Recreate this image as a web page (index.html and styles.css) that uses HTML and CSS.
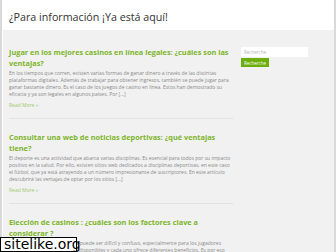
FILE: index.html
```html
<!doctype html>
<html>
<head>
	<title>¿Para información ¡Ya está aquí!</title>
	<meta charset="utf-8">
	<link rel="stylesheet" href="styles.css">
</head>
<body>

	<div class="page">
		<div class="header">
			<h1>¿Para información ¡Ya está aquí!</h1>
		</div>

		<div class="content">
			<div class="main">

				<div class="post">
					<h2>Jugar en los mejores casinos en línea legales: ¿cuáles son las ventajas?</h2>
					<p>En los tiempos que corren, existen varias formas de ganar dinero a través de las distintas plataformas digitales. Además de trabajar para obtener ingresos, también se puede jugar para ganar bastante dinero. Es el caso de los juegos de casino en línea. Estos han demostrado su eficacia y ya son legales en algunos países. Por […]</p>
					<a class="more" href="#">Read More »</a>
				</div>

				<div class="post">
					<h2>Consultar una web de noticias deportivas: ¿qué ventajas tiene?</h2>
					<p>El deporte es una actividad que abarca varias disciplinas. Es esencial para todos por su impacto positivo en la salud. Por ello, existen sitios web dedicados a disciplinas deportivas, en este caso el fútbol, que ya está atrayendo a un número impresionante de suscriptores. En este artículo descubrirá las ventajas de optar por los sitios […]</p>
					<a class="more" href="#">Read More »</a>
				</div>

				<div class="post">
					<h2>Elección de casinos : ¿cuáles son los factores clave a considerar ?</h2>
					<p>Elegir un buen casino en línea puede ser difícil y confuso, especialmente para los jugadores novatos. Hay muchos casinos disponibles y cada uno ofrece diferentes beneficios. Es por eso que conviene conocer los factores clave antes de elegir […]</p>
					<a class="more" href="#">Read More »</a>
				</div>

			</div>

			<div class="side">
				<input type="text" placeholder="Recherche">
				<button>Recherche</button>
			</div>
		</div>
	</div>

	<div class="stamp">sitelike.org</div>

</body>
</html>
```

FILE: styles.css
```css
* {
	box-sizing: border-box;
}
html, body {
	height: 100%;
}
body {
	margin: 0;
	overflow: hidden;
	font-family: "Open Sans", "DejaVu Sans", sans-serif;
	background: #fff;
}
.page {
	display: flex;
	flex-direction: column;
	height: 100%;
	border-left: 2px solid #d9d9d9;
	border-right: 2px solid #d9d9d9;
}
.header {
	flex-shrink: 0;
	height: 30px;
	padding: 3px 7px 0;
	display: flex;
	align-items: center;
}
.header h1 {
	margin: 0;
	font-size: 10.7px;
	font-weight: 400;
	color: #333;
}
.content {
	flex: 1;
	display: flex;
	gap: 8px;
	margin-left: 1px;
	padding: 16.5px 4px 0 6px;
	background: #f1f1f1;
}
.main {
	flex-shrink: 0;
	width: 224px;
}
.post {
	padding: 0 0 8.5px;
	margin-bottom: 13px;
	border-bottom: 1px solid #e2e2e2;
}
.post h2 {
	margin: 0 0 1.5px;
	font-size: 7.35px;
	line-height: 11px;
	font-weight: 700;
	color: #7db52a;
}
.post p {
	margin: 0 0 3px;
	font-size: 5px;
	line-height: 7px;
	color: #8a8a8a;
}
.more {
	display: block;
	font-size: 5px;
	line-height: 8px;
	color: #a1c96a;
	text-decoration: none;
}
.side {
	display: flex;
	flex-direction: column;
	align-items: flex-start;
	padding-top: 0.5px;
}
.side input {
	width: 67px;
	height: 10px;
	padding: 0 3px;
	border: 0;
	outline: none;
	font-family: inherit;
	font-size: 4.5px;
	background: #fff;
}
.side input::placeholder {
	color: #b5b5b5;
}
.side button {
	margin-top: 1px;
	height: 9px;
	padding: 0 3px;
	border: 0;
	font-family: inherit;
	font-size: 4.5px;
	color: #fff;
	background: #6cae0c;
}
.stamp {
	position: absolute;
	left: 0;
	bottom: 0;
	width: 77px;
	height: 15px;
	padding: 0 3px;
	border: 1px solid #000;
	background: #fff;
	font: 14px/13px "DejaVu Sans", sans-serif;
	color: #000;
}
```
